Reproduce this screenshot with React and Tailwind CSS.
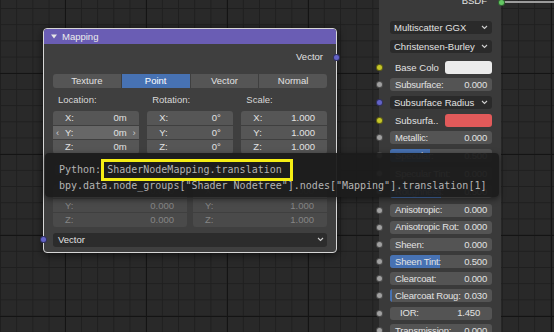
import React from 'react';

// sockets sit on the node edges
const Socket = ({ color, className }) => (
  <span className={`absolute w-[7px] h-[7px] rounded-full border border-black/50 ${color} ${className}`} />
);

const Chevron = ({ className }) => (
  <svg width="7" height="5" viewBox="0 0 7 5" className={className}>
    <polyline points="1,1 3.5,3.5 6,1" fill="none" stroke="#cfcfcf" strokeWidth="1.1" />
  </svg>
);

const Field = ({ label, value, fill, className = 'px-[5px]' }) => (
  <div className={`relative h-[13px] rounded-[3px] bg-[#545454] overflow-hidden flex items-center justify-between whitespace-nowrap tracking-[-0.2px] text-[#e2e2e2] ${className}`}>
    {fill && <div className="absolute left-0 top-0 bottom-0 bg-[#4772b3]" style={{ width: fill }} />}
    <span className="relative">{label}</span>
    <span className="relative">{value}</span>
  </div>
);

const Drop = ({ label }) => (
  <div className="h-[13px] rounded-[3px] bg-[#2a2a2a] flex items-center justify-between whitespace-nowrap px-[4px] text-[#e2e2e2]">
    <span>{label}</span>
    <Chevron />
  </div>
);

const Row = ({ socket, mt, children }) => (
  <div className={`relative ml-[11px] w-[102px] ${mt}`}>
    {socket && <Socket color={socket} className="left-[-14px] top-[3px]" />}
    {children}
  </div>
);

const Swatch = ({ label, color }) => (
  <div className="h-[13px] flex items-center justify-between text-[#e2e2e2]">
    <span className="pl-[5px]">{label}</span>
    <span className={`w-[47px] h-[13px] rounded-[3px] ${color}`} />
  </div>
);

const VecCol = ({ title, values, hover }) => (
  <div className="flex flex-col">
    <div className="h-[12px] flex items-center pl-[5px] text-[#d8d8d8]">{title}</div>
    <div className="mt-[5px] flex flex-col gap-px">
      {['X:', 'Y:', 'Z:'].map((axis, i) => (
        <div
          key={axis}
          className={`relative h-[13.5px] flex items-center justify-between pl-[12px] pr-[12px] text-[#e2e2e2] ${i === 0 ? 'rounded-t-[3px]' : ''} ${i === 2 ? 'rounded-b-[3px]' : ''} ${hover && i === 1 ? 'bg-[#676767]' : 'bg-[#565656]'}`}
        >
          {hover && i === 1 && <span className="absolute left-[3px] text-[#cfcfcf]">‹</span>}
          <span>{axis}</span>
          <span>{values[i]}</span>
          {hover && i === 1 && <span className="absolute right-[3px] text-[#cfcfcf]">›</span>}
        </div>
      ))}
    </div>
  </div>
);

const MinMaxCol = ({ values }) => (
  <div className="flex flex-col gap-px">
    {['X:', 'Y:', 'Z:'].map((axis, i) => (
      <div
        key={axis}
        className={`h-[13.5px] flex items-center justify-between pl-[12px] pr-[13px] bg-[#4a4a4a] text-[#858585] ${i === 0 ? 'rounded-t-[3px]' : ''} ${i === 2 ? 'rounded-b-[3px]' : ''}`}
      >
        <span>{axis}</span>
        <span>{values[i]}</span>
      </div>
    ))}
  </div>
);

const MappingNode = () => (
  <div className="absolute left-[43px] top-[28px] w-[294px] rounded-[4px] border border-[#d6d6d6] bg-[#3f3f3f] shadow-[0_2px_8px_rgba(0,0,0,0.6)]">
    <div className="h-[15px] rounded-t-[3px] bg-[#6a5db4] flex items-center pl-[7px] gap-[5px] text-[#ececec]">
      <svg width="6" height="5" viewBox="0 0 6 5">
        <polygon points="0,0.5 6,0.5 3,4.5" fill="#e6e6e6" />
      </svg>
      <span>Mapping</span>
    </div>

    <div className="px-[9px] pb-[5px]">
      <div className="relative mt-[6px] h-[14px] flex items-center justify-end pr-[4px] text-[#e2e2e2]">
        Vector
        <Socket color="bg-[#6363c7]" className="right-[-13px] top-[3.5px]" />
      </div>

      <div className="mt-[10px] h-[14px] flex gap-px rounded-[3px] overflow-hidden text-[#e2e2e2]">
        <div className="flex-1 bg-[#555555] flex items-center justify-center">Texture</div>
        <div className="flex-1 bg-[#4772b3] flex items-center justify-center text-white">Point</div>
        <div className="flex-1 bg-[#555555] flex items-center justify-center">Vector</div>
        <div className="flex-1 bg-[#555555] flex items-center justify-center">Normal</div>
      </div>

      <div className="mt-[6px] grid grid-cols-3 gap-x-[8.5px]">
        <VecCol title="Location:" values={['0m', '0m', '0m']} hover />
        <VecCol title="Rotation:" values={['0°', '0°', '0°']} />
        <VecCol title="Scale:" values={['1.000', '1.000', '1.000']} />
      </div>

      <div className="mt-[9.5px] h-[14px] grid grid-cols-2 gap-x-[6px] text-[#e2e2e2]">
        <div className="flex items-center gap-[4px] pl-[2px]">
          <span className="w-[10px] h-[10px] rounded-[2px] bg-[#545454]" />
          Min
        </div>
        <div className="flex items-center gap-[4px] pl-[2px]">
          <span className="w-[10px] h-[10px] rounded-[2px] bg-[#545454]" />
          Max
        </div>
      </div>

      <div className="mt-[7px] grid grid-cols-2 gap-x-[6px]">
        <MinMaxCol values={['0.000', '0.000', '0.000']} />
        <MinMaxCol values={['1.000', '1.000', '1.000']} />
      </div>

      <div className="relative mt-[6.5px] h-[13.5px] rounded-[3px] bg-[#2c2c2c] flex items-center justify-between pl-[5px] pr-[3px] text-[#e2e2e2]">
        <span>Vector</span>
        <Chevron />
        <Socket color="bg-[#6363c7]" className="left-[-13.5px] top-[3.25px]" />
      </div>
    </div>
  </div>
);

const PrincipledNode = () => (
  <div className="absolute left-[379px] top-[-6px] w-[122px] h-[345px] rounded-[4px] bg-[#3a3a3a]">
    <div className="relative h-[14px] flex items-center justify-end pr-[14px] text-[#e2e2e2]">
      BSDF
      <Socket color="bg-[#63c763]" className="right-[-4px] top-[4.5px]" />
    </div>
    <Row mt="mt-[13px]"><Drop label="Multiscatter GGX" /></Row>
    <Row mt="mt-[6px]"><Drop label="Christensen-Burley" /></Row>
    <Row mt="mt-[8px]" socket="bg-[#c7c729]"><Swatch label="Base Colo" color="bg-[#ebebeb]" /></Row>
    <Row mt="mt-[4px]" socket="bg-[#a1a1a1]"><Field label="Subsurface:" value="0.000" /></Row>
    <Row mt="mt-[5px]" socket="bg-[#6363c7]"><Drop label="Subsurface Radius" /></Row>
    <Row mt="mt-[5px]" socket="bg-[#c7c729]"><Swatch label="Subsurfa.." color="bg-[#e25a5a]" /></Row>
    <Row mt="mt-[4px]" socket="bg-[#a1a1a1]"><Field label="Metallic:" value="0.000" /></Row>
    <Row mt="mt-[5px]" socket="bg-[#a1a1a1]"><Field label="Specular:" value="0.500" fill="40px" /></Row>
    <Row mt="mt-[5px]" socket="bg-[#a1a1a1]"><Field label="Specular Tint:" value="0.000" /></Row>
    <Row mt="mt-[5px]" socket="bg-[#a1a1a1]"><Field label="Roughness:" value="0.500" fill="51px" /></Row>
    <Row mt="mt-[5.5px]" socket="bg-[#a1a1a1]"><Field label="Anisotropic:" value="0.000" /></Row>
    <Row mt="mt-[4.2px]" socket="bg-[#a1a1a1]"><Field label="Anisotropic Rot:" value="0.000" /></Row>
    <Row mt="mt-[4.2px]" socket="bg-[#a1a1a1]"><Field label="Sheen:" value="0.000" /></Row>
    <Row mt="mt-[4.2px]" socket="bg-[#a1a1a1]"><Field label="Sheen Tint:" value="0.500" fill="50px" /></Row>
    <Row mt="mt-[4.2px]" socket="bg-[#a1a1a1]"><Field label="Clearcoat:" value="0.000" /></Row>
    <Row mt="mt-[4.2px]" socket="bg-[#a1a1a1]"><Field label="Clearcoat Roug:" value="0.030" fill="2px" /></Row>
    <Row mt="mt-[4.2px]" socket="bg-[#a1a1a1]"><Field label="IOR:" value="1.450" className="pl-[10px] pr-[12px]" /></Row>
    <Row mt="mt-[4.2px]" socket="bg-[#a1a1a1]"><Field label="Transmission:" value="0.000" /></Row>
  </div>
);

const Tooltip = () => (
  <div className="absolute left-[45px] top-[153px] w-[454px] h-[44px] rounded-[4px] bg-[#1b1b1b]/95 shadow-[0_2px_6px_rgba(0,0,0,0.5)] pl-[14px] pt-[5.5px] font-['DejaVu_Sans_Mono',monospace] text-[10px] text-[#b4b4b4]">
    <div className="flex items-center h-[22px]">
      <span>Python:</span>
      <span className="h-[22px] flex items-center border-[3px] border-[#f5ee14] pl-[3px] pr-[8px]">
        ShaderNodeMapping.translation
      </span>
    </div>
    <div className="h-[11px] flex items-center whitespace-pre">
      bpy.data.node_groups["Shader Nodetree"].nodes["Mapping"].translation[1]
    </div>
  </div>
);

export default function App() {
  return (
    <div className="relative w-[554px] h-[332px] overflow-hidden bg-[#292929] bg-[linear-gradient(to_right,#141414_1px,transparent_1px),linear-gradient(to_bottom,#141414_1px,transparent_1px),linear-gradient(to_right,#1f1f1f_1px,transparent_1px),linear-gradient(to_bottom,#1f1f1f_1px,transparent_1px)] bg-[size:81px_81px,81px_81px,16.2px_16.2px,16.2px_16.2px] bg-[position:65px_73px,65px_73px,0px_8px,0px_8px] font-['Liberation_Sans',Arial,sans-serif] text-[9.5px] leading-none">
      <svg className="absolute left-[500px] top-0" width="54" height="6">
        <line x1="0" y1="2" x2="54" y2="2" stroke="#9c9c9c" strokeWidth="2" />
      </svg>
      <PrincipledNode />
      <MappingNode />
      <Tooltip />
    </div>
  );
}
